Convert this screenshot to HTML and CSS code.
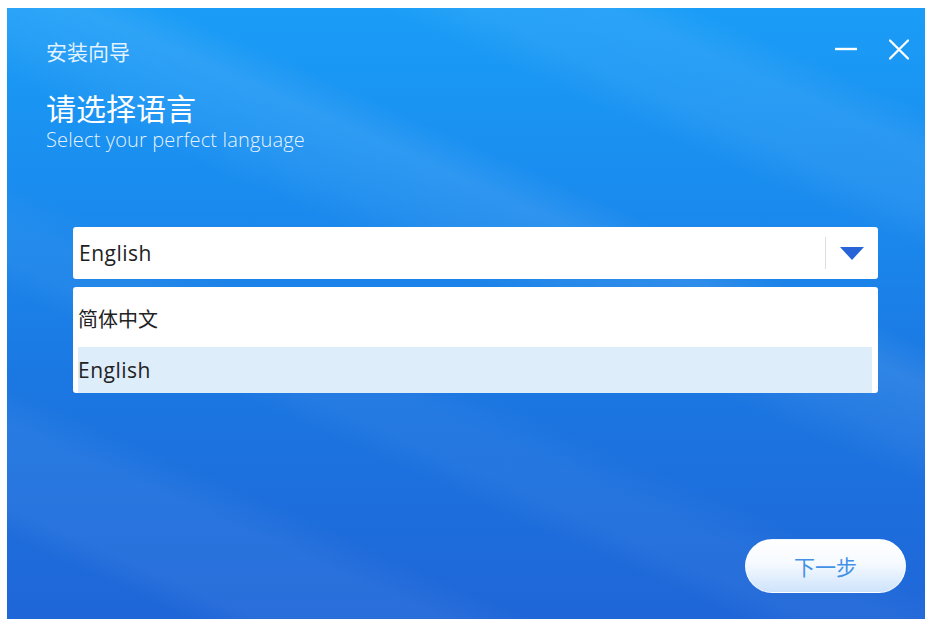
FILE: index.html
```html
<!DOCTYPE html>
<html lang="zh-CN">
<head>
<meta charset="utf-8">
<title>安装向导</title>
<link rel="stylesheet" href="styles.css">
</head>
<body>
<div class="window">
  <header class="titlebar">
    <span class="app-title">安装向导</span>
    <div class="controls">
      <button class="ctl ctl-min" aria-label="最小化">
        <svg width="22" height="20" viewBox="0 0 22 20"><path d="M0 10H22" stroke="#fff" stroke-width="2.4"/></svg>
      </button>
      <button class="ctl ctl-close" aria-label="关闭">
        <svg width="20" height="21" viewBox="0 0 20 21"><path d="M1 1.5L19 19.5M19 1.5L1 19.5" stroke="#fff" stroke-width="2.3" stroke-linecap="round"/></svg>
      </button>
    </div>
  </header>

  <section class="intro">
    <h1 class="intro-title">请选择语言</h1>
    <p class="intro-sub">Select your perfect language</p>
  </section>

  <div class="picker">
    <div class="select">
      <span class="select-value">English</span>
      <span class="select-arrow">
        <svg width="24" height="13" viewBox="0 0 24 13"><path d="M0 0H24L12 13Z" fill="#2864d8"/></svg>
      </span>
    </div>
    <ul class="options">
      <li class="option option-cjk">简体中文</li>
      <li class="option is-active">English</li>
    </ul>
  </div>

  <footer class="actions">
    <button class="btn-next">下一步</button>
  </footer>
</div>
</body>
</html>
```

FILE: styles.css
```css
html, body {
  margin: 0;
  padding: 0;
  background: #fff;
}

body {
  font-family: "Noto Sans CJK SC", "Open Sans", sans-serif;
}

.window {
  margin: 8px 0 0 7px;
  width: 918px;
  height: 611px;
  display: flex;
  flex-direction: column;
  box-sizing: border-box;
  color: #fff;
  /* soft diagonal light streaks over a blue vertical gradient */
  background:
    linear-gradient(204deg,
      rgba(255,255,255,0) 10%,
      rgba(255,255,255,0.07) 14%,
      rgba(255,255,255,0.06) 20%,
      rgba(255,255,255,0) 24%,
      rgba(255,255,255,0) 33%,
      rgba(255,255,255,0.09) 37%,
      rgba(255,255,255,0.05) 43%,
      rgba(255,255,255,0) 47%,
      rgba(255,255,255,0) 57%,
      rgba(255,255,255,0.04) 61%,
      rgba(255,255,255,0.04) 65%,
      rgba(255,255,255,0) 68%,
      rgba(255,255,255,0) 77%,
      rgba(255,255,255,0.05) 81%,
      rgba(255,255,255,0.05) 89%,
      rgba(255,255,255,0) 92%),
    linear-gradient(180deg, #1a9df7 0%, #1a8cef 30%, #1b78e2 60%, #1f66d8 100%);
}

/* title bar */
.titlebar {
  display: flex;
  justify-content: space-between;
  align-items: flex-start;
  padding: 31px 16px 0 39px;
}

.app-title {
  margin-top: 2px;
  font-size: 21px;
  line-height: 21px;
  color: rgba(255,255,255,0.88);
}

.controls {
  display: flex;
  align-items: flex-start;
  gap: 32px;
}

.ctl {
  display: block;
  padding: 0;
  margin: 0;
  border: 0;
  background: none;
  line-height: 0;
}

/* heading */
.intro {
  padding-left: 39px;
}

.intro-title {
  margin: 30px 0 0;
  font-size: 30px;
  line-height: 30px;
  font-weight: 400;
  color: #fff;
}

.intro-sub {
  margin: 5px 0 0;
  font-family: "Open Sans", sans-serif;
  font-weight: 300;
  font-size: 20px;
  line-height: 26px;
  letter-spacing: 0.15px;
  color: rgba(255,255,255,0.9);
}

/* language picker */
.picker {
  margin: 74px 0 0 66px;
  width: 805px;
}

.select {
  height: 52px;
  display: flex;
  align-items: center;
  background: #fff;
  border-radius: 3px;
  padding-left: 6px;
}

.select-value {
  flex: 1;
  font-family: "Open Sans", sans-serif;
  font-size: 21px;
  letter-spacing: 0.5px;
  color: #1e1e1e;
}

.select-arrow {
  width: 52px;
  height: 32px;
  border-left: 1px solid #dedede;
  display: flex;
  align-items: center;
  justify-content: center;
}

.options {
  list-style: none;
  margin: 8px 0 0;
  padding: 8px 6px 0 5px;
  background: #fff;
  border-radius: 3px;
  display: flex;
  flex-direction: column;
  gap: 6px;
}

.option {
  height: 46px;
  display: flex;
  align-items: center;
  font-family: "Open Sans", sans-serif;
  font-size: 21px;
  letter-spacing: 0.5px;
  color: #222;
}

.option-cjk {
  font-family: "Noto Sans CJK SC", sans-serif;
  font-size: 20px;
  letter-spacing: 0;
}

.option.is-active {
  background: #deedfa;
}

/* footer */
.actions {
  margin-top: auto;
  display: flex;
  justify-content: flex-end;
  padding: 0 19px 26px 0;
}

.btn-next {
  width: 161px;
  height: 54px;
  border-radius: 27px;
  border: 1px solid rgba(255,255,255,0.7);
  background: linear-gradient(180deg, #ffffff 0%, #f6faff 45%, #cde3fb 100%);
  font-family: "Noto Sans CJK SC", sans-serif;
  font-size: 21px;
  color: #4391e6;
  padding: 0;
}
```
